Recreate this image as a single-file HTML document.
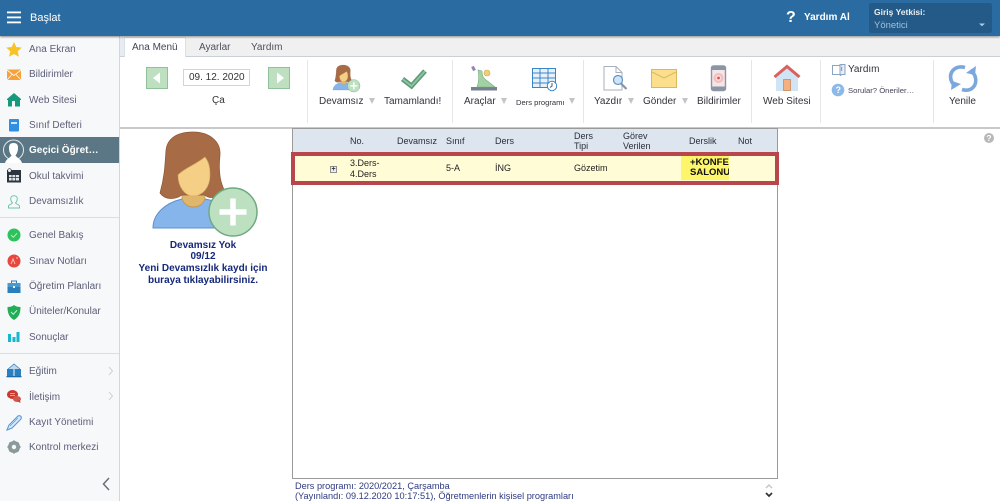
<!DOCTYPE html>
<html lang="tr">
<head>
<meta charset="utf-8">
<title>Başlat</title>
<style>
html,body{margin:0;padding:0;width:1000px;height:501px;overflow:hidden;background:#fff;font-family:"Liberation Sans",sans-serif;}
.a{position:absolute;white-space:nowrap;}
svg{position:absolute;overflow:visible;}
#top{left:0;top:0;width:1000px;height:36px;background:#2a6ca2;box-shadow:0 1px 2px rgba(0,0,0,.45);z-index:5;}
#side{left:0;top:36px;width:119px;height:465px;background:#f7f8fa;border-right:1px solid #d4d6d8;z-index:3;}
.m{position:absolute;left:29px;font-size:10px;color:#5c5e78;white-space:nowrap;line-height:13px;}
.hr{position:absolute;left:0;width:119px;height:1px;background:#dcdddf;}
.t{position:absolute;font-size:10px;color:#333;white-space:nowrap;line-height:12px;}
.r{position:absolute;font-size:10px;color:#33333d;white-space:nowrap;line-height:12px;}
.sep{position:absolute;top:60px;width:1px;height:63px;background:#e4e6e8;}
.arr{position:absolute;top:98px;width:0;height:0;border-left:3.500px solid transparent;border-right:3.500px solid transparent;border-top:6.500px solid #c2c5c8;}
.h{position:absolute;font-size:9px;color:#2b2b3b;line-height:10px;white-space:nowrap;}
.c{position:absolute;font-size:9px;color:#222;line-height:10.500px;white-space:nowrap;}
.nb{position:absolute;left:0;width:140px;text-align:center;color:#15297a;font-size:10px;font-weight:bold;line-height:11.500px;white-space:nowrap;}
</style>
</head>
<body>
<div class="a" id="top"></div>
<svg style="left:0;top:0;z-index:6" width="1000" height="36">
<rect x="7" y="11.500" width="14" height="1.800" fill="#fff"/><rect x="7" y="16.500" width="14" height="1.800" fill="#fff"/><rect x="7" y="21.500" width="14" height="1.800" fill="#fff"/>
<rect x="869" y="3" width="123" height="30" rx="2" fill="#235a88"/>
<path d="M979 23.500h6l-3 2.800z" fill="#b4cbe0"/>
</svg>
<div class="a" style="left:30px;top:12px;color:#fff;font-size:11px;z-index:6">Başlat</div>
<div class="a" style="left:786px;top:8px;color:#fff;font-size:16px;font-weight:bold;z-index:6;line-height:20px">?</div>
<div class="a" style="left:804px;top:12px;color:#fff;font-size:10px;font-weight:bold;z-index:6;line-height:12px">Yardım Al</div>
<div class="a" style="left:874px;top:7px;color:#e8eef4;font-size:8.500px;font-weight:bold;z-index:6;line-height:11px">Giriş Yetkisi:</div>
<div class="a" style="left:874px;top:20px;color:#9fc0de;font-size:9.500px;z-index:6;line-height:12px">Yönetici</div>

<!-- Tabs -->
<div class="a" style="left:120px;top:37px;width:880px;height:19px;background:#f0f0f0;border-bottom:1px solid #c8d0d8"></div>
<div class="a" style="left:120px;top:37px;width:4px;height:19px;background:#e6ecf2"></div>
<div class="a" style="left:124px;top:37px;width:62px;height:20px;background:#fff;border:1px solid #d8e0e8;border-bottom:none;box-sizing:border-box"></div>
<div class="t" style="left:132px;top:42px;color:#3e4658">Ana Menü</div>
<div class="t" style="left:199px;top:42px;color:#4e5060">Ayarlar</div>
<div class="t" style="left:251px;top:42px;color:#4e5060">Yardım</div>

<!-- Ribbon -->
<div class="a" style="left:120px;top:127px;width:880px;height:2px;background:#c9c9c9"></div>
<div class="sep" style="left:307px"></div><div class="sep" style="left:452px"></div><div class="sep" style="left:583px"></div><div class="sep" style="left:751px"></div><div class="sep" style="left:820px"></div><div class="sep" style="left:933px"></div>

<svg style="left:0;top:0" width="1000" height="130">
<defs>
<g id="av">
<path d="M28 103c0-14 12-25 29-29l23 0c16 3 24 8 30 15l-4 14z" fill="#86b5ec" stroke="#5f90c8"/>
<path d="M57 66h23v8c-2 5-6 8-11.500 8s-9.500-3-11.500-8z" fill="#e0b56c" stroke="#b88f50" stroke-width=".7"/>
<path d="M68 7C50 7 42 15 41 25 40 38 40 50 35 68c5 7 15 7 22 2h23c5 5 12 2 20-3-4-9-7-17-5-37C96 17 85 7 68 7z" fill="#a76c45" stroke="#8c5735" stroke-width=".7"/>
<path d="M53 50C58 44 70 40 80 32c3 4 5 8 5 18 0 12-7 21-17 21-8 0-15-9-15-21z" fill="#f5cf85" stroke="#d0a860" stroke-width=".6"/>
<circle cx="108" cy="87" r="24" fill="#bde0c0" stroke="#6fa982" stroke-width="1.500"/>
<path d="M108 73.500v27M94.500 87h27" stroke="#fff" stroke-width="5.500"/>
</g>
</defs>
<!-- date arrows -->
<rect x="146.500" y="67.500" width="21" height="21" fill="#bfe0c0" stroke="#8fc09a"/>
<path d="M160 72.500v11l-7-5.500z" fill="#fff"/>
<rect x="268.500" y="67.500" width="21" height="21" fill="#bfe0c0" stroke="#8fc09a"/>
<path d="M277 72.500v11l7-5.500z" fill="#fff"/>
<rect x="183.500" y="69.500" width="66" height="16" fill="#fff" stroke="#d4d4d4"/>
<!-- Devamsız -->
<use href="#av" transform="translate(325.700 63.200) scale(.26)"/>
<!-- check -->
<path d="M402.500 79l9 7 13.500-15" fill="none" stroke="#5c9a78" stroke-width="5"/>
<path d="M402.500 79l9 7 13.500-15" fill="none" stroke="#8fc5a0" stroke-width="1.800"/>
<!-- Araçlar -->
<rect x="471" y="87" width="26" height="3.500" fill="#77808c"/>
<path d="M478 70l4 1c0 4 1 7 4 9l9 7h-18c2-5 2-12 1-17z" fill="#a2d2a4" stroke="#78aa80" stroke-width=".6"/>
<circle cx="487" cy="73" r="3" fill="#f0cf78" stroke="#c8a850" stroke-width=".6"/>
<path d="M472.500 66.500l2 4" stroke="#9a80b8" stroke-width="3"/>
<!-- Ders programı -->
<g stroke="#3a85c8" fill="#fff" stroke-width="1">
<rect x="532.500" y="68.500" width="23" height="19" fill="#e8f1fa"/>
<path d="M532.500 73h23M532.500 78h23M532.500 83h23M540 68.500v19M548 68.500v19" fill="none"/>
<circle cx="552" cy="86" r="4.700"/>
<path d="M552 83v3l-2 1.500" fill="none" stroke="#555"/>
</g>
<!-- Yazdır -->
<path d="M604 66.500h12l6 6v17.500h-18z" fill="#fff" stroke="#a8b0bc"/>
<path d="M616 66.500v6h6" fill="none" stroke="#a8b0bc"/>
<circle cx="618" cy="80" r="4.500" fill="#cfe4f7" stroke="#5c94c8" stroke-width="1.200"/>
<path d="M621 83.500l5.500 5.500" stroke="#8a94a2" stroke-width="2.200"/>
<!-- Gönder -->
<rect x="651.500" y="69.500" width="25" height="18" fill="#fbdf8c" stroke="#d9b860"/>
<path d="M652 72l12 6 12-6" fill="none" stroke="#d9b860"/>
<!-- Bildirimler -->
<rect x="711.500" y="66" width="14" height="24.500" rx="2" fill="#f6e5e5" stroke="#8a96a6" stroke-width="1.400"/>
<rect x="711" y="66" width="15" height="4" rx="1.500" fill="#8a96a6"/><rect x="711" y="86.500" width="15" height="4" rx="1.500" fill="#8a96a6"/>
<circle cx="718.500" cy="78" r="5" fill="#f4bcbc"/><circle cx="718.500" cy="78" r="3" fill="#f6dcdc"/><circle cx="718.500" cy="78" r="1.400" fill="#d85858"/>
<!-- Web Sitesi -->
<path d="M776 76l11-9 11 9v15h-22z" fill="#cfe5f6"/>
<path d="M774.500 77l12.500-10.500 12.500 10.500" fill="none" stroke="#d9625f" stroke-width="3"/>
<rect x="783.500" y="79.500" width="7" height="11" fill="#f4b080" stroke="#c88050" stroke-width=".7"/>
<!-- Yardım book -->
<path d="M832.500 65.500h8l1 1 1-1h2v9h-3l-1 1-1-1h-7z" fill="#fff" stroke="#8aa4c4"/>
<rect x="840" y="64.500" width="5" height="10" fill="#e8eef6" stroke="#8aa4c4"/>
<circle cx="838" cy="90" r="6.300" fill="#8cb8ea"/>
<!-- Yenile -->
<path d="M965 67.500C955 65 949 72 951 80c1 3 3 5 5 6" fill="none" stroke="#7aa7dc" stroke-width="3.600"/>
<path d="M962 89.500c10 3 16-5 13-13.500-1-3-3-4-5-5.500" fill="none" stroke="#7aa7dc" stroke-width="3.600"/>
<path d="M951 90l1-9 9 3zM976 66l-1 9-9-2z" fill="#7aa7dc"/>
</svg>
<div class="a" style="left:835.500px;top:85px;font-size:9px;font-weight:bold;color:#fff;line-height:10px">?</div>
<div class="a" style="left:841px;top:66px;font-size:7px;color:#555;line-height:8px">i</div>
<div class="a" style="left:189px;top:72px;font-size:10px;color:#333;line-height:12px">09. 12. 2020</div>
<div class="a" style="left:212px;top:95px;font-size:10px;color:#333;line-height:12px">Ça</div>
<div class="r" style="left:319px;top:96px">Devamsız</div><div class="arr" style="left:369px"></div>
<div class="r" style="left:384px;top:96px">Tamamlandı!</div>
<div class="r" style="left:464px;top:96px">Araçlar</div><div class="arr" style="left:501px"></div>
<div class="r" style="left:516px;top:97px;font-size:7.600px">Ders programı</div><div class="arr" style="left:569px"></div>
<div class="r" style="left:594px;top:96px">Yazdır</div><div class="arr" style="left:628px"></div>
<div class="r" style="left:643px;top:96px">Gönder</div><div class="arr" style="left:682px"></div>
<div class="r" style="left:697px;top:96px">Bildirimler</div>
<div class="r" style="left:763px;top:96px">Web Sitesi</div>
<div class="r" style="left:848px;top:64px">Yardım</div>
<div class="r" style="left:848px;top:85px;font-size:7.700px;color:#44445a">Sorular? Öneriler…</div>
<div class="r" style="left:949px;top:96px">Yenile</div>

<!-- Left panel -->
<svg style="left:125px;top:125px" width="160" height="120"><use href="#av"/></svg>
<div class="a" style="left:133px;top:240px;width:140px;height:50px">
<div class="nb" style="top:0">Devamsız Yok</div>
<div class="nb" style="top:11px">09/12</div>
<div class="nb" style="top:23px">Yeni Devamsızlık kaydı için</div>
<div class="nb" style="top:35px">buraya tıklayabilirsiniz.</div>
</div>

<!-- Table -->
<div class="a" style="left:292px;top:128px;width:486px;height:351px;box-sizing:border-box;border:1px solid #9a9a9a;background:#fff"></div>
<div class="a" style="left:293px;top:129px;width:484px;height:23px;background:#dde6ee"></div>
<div class="h" style="left:350px;top:136px">No.</div>
<div class="h" style="left:397px;top:136px">Devamsız</div>
<div class="h" style="left:446px;top:136px">Sınıf</div>
<div class="h" style="left:495px;top:136px">Ders</div>
<div class="h" style="left:574px;top:131px">Ders<br>Tipi</div>
<div class="h" style="left:623px;top:131px">Görev<br>Verilen</div>
<div class="h" style="left:689px;top:136px">Derslik</div>
<div class="h" style="left:738px;top:136px">Not</div>
<div class="a" style="left:291px;top:152px;width:488px;height:33px;box-sizing:border-box;border:4px solid #b8474d;background:#fffcd6"></div>
<div class="a" style="left:330px;top:166px;width:7px;height:7px;box-sizing:border-box;border:1px solid #8f8f8f;background:#eee;font-size:7px;line-height:5px;text-align:center;color:#333;font-weight:bold">+</div>
<div class="c" style="left:350px;top:158px">3.Ders-<br>4.Ders</div>
<div class="c" style="left:446px;top:163px">5-A</div>
<div class="c" style="left:495px;top:163px">İNG</div>
<div class="c" style="left:574px;top:163px">Gözetim</div>
<div class="a" style="left:681px;top:156px;width:48px;height:24px;background:#fdf56a;overflow:hidden">
<div style="position:absolute;left:9px;top:1.500px;font-size:9.500px;font-weight:bold;color:#111;line-height:10.500px;white-space:nowrap">+KONFERANS<br>SALONU</div>
</div>
<div class="a" style="left:984px;top:133px;width:10px;height:10px;border-radius:50%;background:#b8b8b8;color:#fff;font-size:8.500px;font-weight:bold;line-height:10px;text-align:center">?</div>

<!-- Footer -->
<div class="a" style="left:295px;top:481px;font-size:9.200px;color:#2e3a80;line-height:10px">Ders programı: 2020/2021, Çarşamba<br>(Yayınlandı: 09.12.2020 10:17:51), Öğretmenlerin kişisel programları</div>
<svg style="left:761px;top:482px" width="16" height="17">
<path d="M5 6l3-3 3 3" fill="none" stroke="#c8c8c8" stroke-width="1.500"/>
<path d="M5 11l3 3 3-3" fill="none" stroke="#333" stroke-width="1.700"/>
</svg>

<!-- Sidebar -->
<div class="a" id="side">
<div class="a" style="left:0;top:101px;width:119px;height:26px;background:#5b7684"></div>
<div class="hr" style="top:181px"></div>
<div class="hr" style="top:317px"></div>
<div class="m" style="top:7px">Ana Ekran</div>
<div class="m" style="top:32px">Bildirimler</div>
<div class="m" style="top:58px">Web Sitesi</div>
<div class="m" style="top:83px">Sınıf Defteri</div>
<div class="m" style="top:108px;color:#fff;font-weight:bold">Geçici Öğret…</div>
<div class="m" style="top:134px">Okul takvimi</div>
<div class="m" style="top:159px">Devamsızlık</div>
<div class="m" style="top:193px">Genel Bakış</div>
<div class="m" style="top:219px">Sınav Notları</div>
<div class="m" style="top:244px">Öğretim Planları</div>
<div class="m" style="top:269px">Üniteler/Konular</div>
<div class="m" style="top:295px">Sonuçlar</div>
<div class="m" style="top:329px">Eğitim</div>
<div class="m" style="top:355px">İletişim</div>
<div class="m" style="top:380px">Kayıt Yönetimi</div>
<div class="m" style="top:405px">Kontrol merkezi</div>
</div>
<svg style="left:0;top:36px;z-index:4" width="119" height="465">
<!-- star -->
<path d="M14 6l2.300 5 5.500.6-4.100 3.700 1.200 5.400L14 18l-4.900 2.700 1.200-5.400-4.100-3.700 5.500-.6z" fill="#f7c325"/>
<!-- mail -->
<rect x="7" y="33.500" width="14" height="10.500" fill="#f6a13a"/><path d="M7 34l7 5.500 7-5.500M7 44l5-5.500M21 44l-5-5.500" fill="none" stroke="#fff" stroke-width=".8"/>
<!-- home -->
<path d="M7 63l7-6 7 6v1h-1v6.500H8V64H7z" fill="#17997c"/><rect x="12" y="65" width="3" height="5.500" fill="#f7f8fa"/>
<!-- notebook -->
<rect x="9" y="83" width="10" height="12.500" rx="1" fill="#2f8fe0"/><rect x="11" y="86" width="6" height="2" fill="#cfe6fa"/>
<!-- user on active -->
<circle cx="13.500" cy="114" r="10" fill="none" stroke="#e6ecef" stroke-width="1"/>
<path d="M5 127c1-4 5-5 6.500-7.500-2-2.500-2.500-5-2.500-8 0-3 1.500-4.500 4.500-4.500s4.500 1.500 4.500 4.500c0 3-.5 5.500-2.500 8 1.500 2.500 5.500 3.500 6.500 7.500z" fill="#fff"/>
<!-- calendar -->
<rect x="7" y="134" width="14" height="12.500" fill="#2c3440"/><rect x="9" y="139" width="10" height="5.500" fill="#dfe3e8"/><path d="M12 139v5.500M15.500 139v5.500M9 141.500h10" stroke="#2c3440" stroke-width=".7"/><circle cx="9.500" cy="134.500" r="1.800" fill="#eef0f2" stroke="#2c3440" stroke-width=".6"/>
<!-- person outline -->
<path d="M8.500 172v-2c0-1.500 3-1.500 4-3-1-1-1.800-2.800-1.800-4.500 0-1.700 1.300-2.800 3.300-2.800s3.300 1.100 3.300 2.800c0 1.700-.8 3.500-1.800 4.500 1 1.500 4 1.500 4 3v2z" fill="none" stroke="#74c4a6" stroke-width="1"/>
<!-- genel bakış -->
<circle cx="14" cy="199" r="6.500" fill="#2cc25c"/><path d="M11 199l2.300 2.300 3.700-4" fill="none" stroke="#bff0cc" stroke-width="1"/>
<!-- sinav -->
<circle cx="14" cy="225" r="6.500" fill="#e8473f"/><path d="M11 228l2-5 2 5M16 222h2" fill="none" stroke="#f7bdb8" stroke-width="1"/>
<!-- briefcase -->
<rect x="7.500" y="247" width="13" height="10" fill="#2c7fba"/><rect x="7.500" y="247" width="13" height="4" fill="#4a9ad2"/><path d="M11.500 247v-2h5v2" fill="none" stroke="#2c7fba" stroke-width="1"/>
<rect x="13" y="250" width="2" height="2" fill="#eaf4fb"/>
<!-- shield -->
<path d="M14 269c2 1.500 4 2 6.500 2 0 5-1 10-6.500 13-5.500-3-6.500-8-6.500-13 2.500 0 4.500-.5 6.500-2z" fill="#22ae57"/><path d="M11 276l2.300 2.300 3.700-4" fill="none" stroke="#d2f3dd" stroke-width="1"/>
<!-- sonuclar -->
<rect x="8" y="298" width="3" height="8" fill="#17b8cf"/><rect x="12.500" y="301" width="3" height="5" fill="#17b8cf"/><rect x="16.500" y="296" width="3" height="10" fill="#17b8cf"/>
<!-- egitim -->
<path d="M7 333v7.500h6.500V333zM14.500 333v7.500H21V333z" fill="#2b7ec0"/>
<path d="M8 333l6-5 6 5" fill="#bcd9ef" stroke="#2b7ec0" stroke-width=".7"/>
<rect x="6.500" y="340" width="15" height="1.300" fill="#1e6aa6"/>
<path d="M109 331l3.500 4-3.500 4" fill="none" stroke="#d0d2d4" stroke-width="1"/>
<!-- iletisim -->
<ellipse cx="12.500" cy="358.500" rx="5.500" ry="4.500" fill="#cb3a2e"/><ellipse cx="17" cy="363" rx="4" ry="3" fill="#d05a4e"/><path d="M17 365l3.500 2 -.5-3z" fill="#cb3a2e"/><path d="M10 357.500h5M10 359.500h5" stroke="#f5c6c0" stroke-width=".8"/>
<path d="M109 356l3.500 4-3.500 4" fill="none" stroke="#d0d2d4" stroke-width="1"/>
<!-- kayit -->
<path d="M7 394l2-5 9-9c2-1 4 .5 3 3l-9 9z" fill="#dcebfa" stroke="#5a9ad8" stroke-width="1.100"/><path d="M10 390l8-8M12 392l6-6" stroke="#5a9ad8" stroke-width=".7"/>
<!-- gear -->
<circle cx="14" cy="411" r="4.500" fill="none" stroke="#8a9a9a" stroke-width="3"/>
<path d="M14 404.500v13M7.500 411h13M9.500 406.500l9 9M18.500 406.500l-9 9" stroke="#8a9a9a" stroke-width="2"/>
<circle cx="14" cy="411" r="2.200" fill="#f7f8fa"/>
<!-- collapse -->
<path d="M109 442l-5.500 6 5.500 6" fill="none" stroke="#6a7078" stroke-width="1.500"/>
</svg>
</body>
</html>
